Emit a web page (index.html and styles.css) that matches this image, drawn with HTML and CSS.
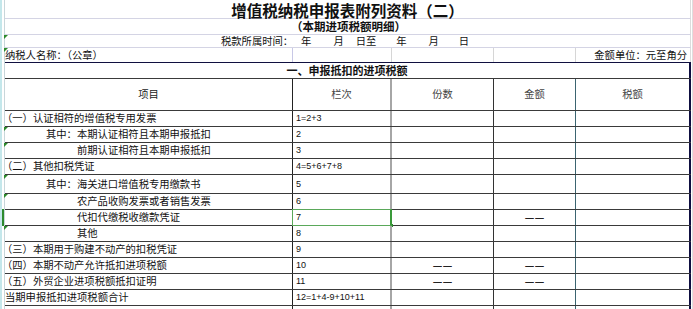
FILE: index.html
```html
<!DOCTYPE html>
<html lang="zh-CN">
<head>
<meta charset="utf-8">
<title>增值税纳税申报表附列资料（二）</title>
<link rel="stylesheet" href="styles.css">
</head>
<body>
<div class="page">
  <div class="gutter"></div>
  <div class="sheet">
    <div class="row top r-title"><div class="cell full title">增值税纳税申报表附列资料（二）</div></div>
    <div class="row top r-sub"><div class="cell full sub">（本期进项税额明细）</div></div>
    <div class="row top r-period">
      <div class="cell full period flag">
        <span>税款所属时间：</span><span class="p1">年</span><span class="p2">月</span><span class="p3">日至</span><span class="p4">年</span><span class="p5">月</span><span class="p6">日</span>
      </div>
    </div>
    <div class="row r-name">
      <div class="cell c1 flag">纳税人名称：（公章）</div>
      <div class="cell c2"></div>
      <div class="cell c3"></div>
      <div class="cell c4"></div>
      <div class="cell c5 unit">金额单位：元至角分</div>
    </div>
    <div class="tbl">
      <div class="row r-sec"><div class="cell secfull sec">一、申报抵扣的进项税额</div></div>
      <div class="row r-head">
        <div class="cell c1 hd hd-main">项目</div>
        <div class="cell c2 hd">栏次</div>
        <div class="cell c3 hd">份数</div>
        <div class="cell c4 hd">金额</div>
        <div class="cell c5 hd">税额</div>
      </div>
      <div class="row">
        <div class="cell c1 l0">（一）认证相符的增值税专用发票</div>
        <div class="cell c2 num">1=2+3</div><div class="cell c3"></div><div class="cell c4"></div><div class="cell c5"></div>
      </div>
      <div class="row">
        <div class="cell c1 l1 flag">其中：本期认证相符且本期申报抵扣</div>
        <div class="cell c2 num">2</div><div class="cell c3"></div><div class="cell c4"></div><div class="cell c5"></div>
      </div>
      <div class="row">
        <div class="cell c1 l2 flag">前期认证相符且本期申报抵扣</div>
        <div class="cell c2 num">3</div><div class="cell c3"></div><div class="cell c4"></div><div class="cell c5"></div>
      </div>
      <div class="row">
        <div class="cell c1 l0">（二）其他扣税凭证</div>
        <div class="cell c2 num">4=5+6+7+8</div><div class="cell c3"></div><div class="cell c4"></div><div class="cell c5"></div>
      </div>
      <div class="row r-tall">
        <div class="cell c1 l1 flag">其中：海关进口增值税专用缴款书</div>
        <div class="cell c2 num">5</div><div class="cell c3"></div><div class="cell c4"></div><div class="cell c5"></div>
      </div>
      <div class="row">
        <div class="cell c1 l2 flag">农产品收购发票或者销售发票</div>
        <div class="cell c2 num">6</div><div class="cell c3"></div><div class="cell c4"></div><div class="cell c5"></div>
      </div>
      <div class="row">
        <div class="cell c1 l2 mark">代扣代缴税收缴款凭证</div>
        <div class="cell c2 num selected">7</div><div class="cell c3"></div><div class="cell c4 dash">——</div><div class="cell c5"></div>
      </div>
      <div class="row">
        <div class="cell c1 l2 flag">其他</div>
        <div class="cell c2 num">8</div><div class="cell c3"></div><div class="cell c4"></div><div class="cell c5"></div>
      </div>
      <div class="row">
        <div class="cell c1 l0">（三）本期用于购建不动产的扣税凭证</div>
        <div class="cell c2 num">9</div><div class="cell c3"></div><div class="cell c4"></div><div class="cell c5"></div>
      </div>
      <div class="row">
        <div class="cell c1 l0">（四）本期不动产允许抵扣进项税额</div>
        <div class="cell c2 num">10</div><div class="cell c3 dash">——</div><div class="cell c4 dash">——</div><div class="cell c5"></div>
      </div>
      <div class="row">
        <div class="cell c1 l0">（五）外贸企业进项税额抵扣证明</div>
        <div class="cell c2 num">11</div><div class="cell c3 dash">——</div><div class="cell c4 dash">——</div><div class="cell c5"></div>
      </div>
      <div class="row">
        <div class="cell c1 l0 tot">当期申报抵扣进项税额合计</div>
        <div class="cell c2 num">12=1+4-9+10+11</div><div class="cell c3"></div><div class="cell c4"></div><div class="cell c5"></div>
      </div>
      <div class="row r-tail">
        <div class="cell c1"></div><div class="cell c2"></div><div class="cell c3"></div><div class="cell c4"></div><div class="cell c5"></div>
      </div>
    </div>
  </div>
  <div class="rgutter"></div>
</div>
</body>
</html>
```

FILE: styles.css
```css
* { box-sizing: border-box; margin: 0; padding: 0; }
html, body { background: #fff; }
body {
  font-family: "Noto Sans CJK SC", "Noto Sans", sans-serif;
  font-size: 10.3px;
  color: #111;
  width: 693px;
  height: 309px;
  overflow: hidden;
}
.page { display: flex; align-items: flex-start; }
.gutter {
  width: 4px; height: 309px; flex: none;
  background: linear-gradient(to right, #c4e7eb 0 2px, #fff 2px 4px);
}
.sheet { width: 687px; flex: none; border-left: 1px solid #c8d6da; }
.rgutter { width: 2px; height: 309px; flex: none; border-right: 1px solid #dedede; }

.row { display: flex; height: 16px; border-bottom: 1px solid #3a3a3a; }
.row.top { border-bottom: 1px solid #d4d4e4; }
.r-title { height: 19px; }
.r-sub { height: 16px; }
.r-period { height: 13px; }
.r-name { height: 14px; border-bottom: none; }
.r-sec { height: 16px; }
.r-head { height: 32px; }
.r-tall { height: 19px; }
.r-tail { height: 10px; border-bottom: none; }

.cell {
  display: flex; align-items: center; flex: none;
  white-space: nowrap; position: relative; line-height: 1;
}
.full { width: 686px; justify-content: center; border-right: 1px solid #dcdcdc; }
.secfull { width: 686px; justify-content: center; border-right: 2px solid #0e0e40; }

.c1 { width: 288px; border-right: 1px solid #222; }
.c2 { width: 99px; border-right: 2px solid #a6a6a6; }
.c3 { width: 102px; border-right: 1px solid #333; }
.c4 { width: 82px; border-right: 1px solid #3b6470; }
.c5 { width: 115px; border-right: 2px solid #0e0e40; }

.r-name .c1 { border-right-color: #c8c8e6; }
.r-name .c2, .r-name .c3, .r-name .c4 { border-right: 1px solid #d6d6d6; }
.r-name .c5 { border-right: 1px solid #dcdcdc; }

.tbl { border-top: 1px solid #101040; }

.title { font-size: 15.5px; font-weight: 700; color: #111; line-height: 16px; padding-top: 1px; }
.sub { font-size: 11.5px; font-weight: 700; padding-left: 2px; }
.period { justify-content: flex-start; padding-left: 216px; font-size: 10.3px; }
.period .p1 { margin-left: 8px; }
.period .p2 { margin-left: 22px; }
.period .p3 { margin-left: 12px; }
.period .p4 { margin-left: 20px; }
.period .p5 { margin-left: 22px; }
.period .p6 { margin-left: 20px; }

.unit { justify-content: flex-end; padding-right: 3px; }
.sec { font-size: 11px; font-weight: 700; }

.hd { justify-content: center; color: #444; }
.hd-main { color: #222; }

.l0 { padding-left: 0; }
.l0:not(.tot) { text-indent: -3px; }
.l1 { padding-left: 41px; }
.l2 { padding-left: 72px; }

.num {
  font-family: "Liberation Sans", Arial, sans-serif;
  font-size: 9px;
  padding-left: 3px;
  color: #111;
}
.dash {
  justify-content: center;
  font-family: "Liberation Sans", Arial, sans-serif;
  font-size: 8px;
  letter-spacing: 2px;
  padding-left: 2px;
  color: #222;
  -webkit-text-stroke: 0.4px #222;
}

.flag::before {
  content: "";
  position: absolute; left: -1px; top: 0;
  width: 0; height: 0;
  border-top: 4px solid #2d8a2d;
  border-right: 4px solid transparent;
}
.mark::before {
  content: "";
  position: absolute; left: -3px; top: -1px;
  width: 2px; height: 17px;
  background: #2d8a2d;
}
.selected::after {
  content: "";
  position: absolute; left: -1px; top: -1px; right: -2px; bottom: -1px;
  border: 1px solid #5aa85a;
  border-right: 2px solid #3a9a3a;
}
.selected::before {
  content: "";
  position: absolute; right: -3px; bottom: -2px;
  width: 3px; height: 3px;
  background: #2d8a2d;
}
```
